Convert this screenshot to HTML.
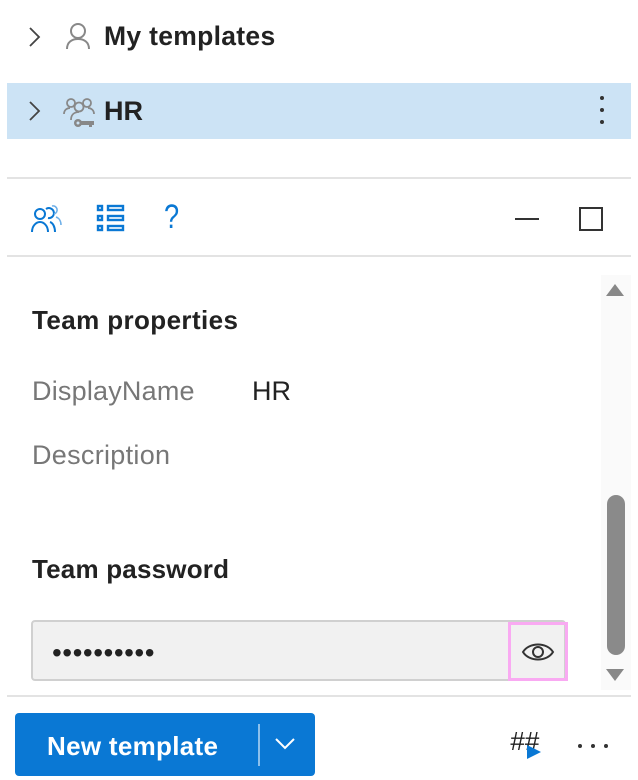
<!DOCTYPE html><html><head><style>
body{margin:0;width:638px;height:780px;background:#fff;font-family:"Liberation Sans",sans-serif;position:relative;overflow:hidden;color:#222}
.a{position:absolute}
.t{font-size:27px}
.g{color:#777}
</style></head><body>
<svg class="a" style="left:28px;top:26px" width="14" height="22"><path d="M2 2l9 9-9 9" stroke="#444" stroke-width="1.8" fill="none"/></svg>
<svg class="a" style="left:65px;top:22px" width="28" height="28"><circle cx="13" cy="9" r="7" stroke="#888" stroke-width="2" fill="none"/><path d="M2 27c0-7 5-10 11-10s11 3 11 10" stroke="#888" stroke-width="2" fill="none"/></svg>
<div class="a" style="left:104px;top:21px;font-weight:bold;font-size:26.5px;letter-spacing:0.3px">My templates</div>
<div class="a" style="left:7px;top:83px;width:624px;height:56px;background:#cce3f5"></div>
<svg class="a" style="left:28px;top:100px" width="14" height="22"><path d="M2 2l9 9-9 9" stroke="#444" stroke-width="1.8" fill="none"/></svg>
<svg class="a" style="left:63px;top:96px" width="34" height="32"><circle cx="8" cy="7" r="4" stroke="#888" stroke-width="1.8" fill="none"/><circle cx="24" cy="7" r="4" stroke="#888" stroke-width="1.8" fill="none"/><circle cx="16" cy="11" r="4.5" stroke="#888" stroke-width="1.8" fill="none"/><path d="M1 18c0-4 3-6 6-6M31 18c0-4-3-6-6-6M8 24c0-5 3-8 8-8" stroke="#888" stroke-width="1.8" fill="none"/><circle cx="15" cy="27" r="4" fill="#888"/><rect x="17" y="25" width="14" height="4" fill="#888"/><rect x="26" y="27" width="3" height="4" fill="#888"/><circle cx="15" cy="27" r="1.5" fill="#cce3f5"/></svg>
<div class="a" style="left:104px;top:96px;font-weight:bold;font-size:27px">HR</div>
<div class="a" style="left:600px;top:96px;width:4px;height:4px;border-radius:2px;background:#333;box-shadow:0 12px #333,0 24px #333"></div>
<div class="a" style="left:7px;top:177px;width:624px;height:2px;background:#e3e3e3"></div>
<svg class="a" style="left:30px;top:203px" width="34" height="30"><circle cx="10" cy="11" r="5" stroke="#0a78d4" stroke-width="2" fill="none"/><path d="M2 29c0-6 4-10 8-10s8 4 8 10" stroke="#0a78d4" stroke-width="2" fill="none"/><path d="M16 6a5 5 0 1 1 2 9M20 19c3 1 5 5 5 10" stroke="#0a78d4" stroke-width="2" fill="none"/><path d="M22 3a4 4 0 1 1 2 8M26 14c3 1 5 4 5 8" stroke="#6fb0e8" stroke-width="1.6" fill="none"/></svg>
<svg class="a" style="left:96px;top:204px" width="30" height="28"><g fill="none" stroke="#0a78d4" stroke-width="2.4"><rect x="2" y="2" width="4" height="4"/><rect x="2" y="12" width="4" height="4"/><rect x="2" y="22" width="4" height="4"/><rect x="12" y="2" width="15" height="4"/><rect x="12" y="12" width="15" height="4"/><rect x="12" y="22" width="15" height="4"/></g></svg>
<div class="a" style="left:164px;top:198px;font-size:34px;color:#0a78d4;transform:scaleX(0.8);transform-origin:left">?</div>
<div class="a" style="left:515px;top:218px;width:24px;height:2px;background:#333"></div>
<div class="a" style="left:579px;top:207px;width:20px;height:20px;border:2px solid #333"></div>
<div class="a" style="left:7px;top:255px;width:624px;height:2px;background:#e3e3e3"></div>
<div class="a" style="left:601px;top:275px;width:30px;height:415px;background:#fafafa"></div>
<div class="a" style="left:606px;top:284px;width:0;height:0;border-left:9px solid transparent;border-right:9px solid transparent;border-bottom:12px solid #888"></div>
<div class="a" style="left:607px;top:495px;width:18px;height:160px;border-radius:9px;background:#8a8a8a"></div>
<div class="a" style="left:606px;top:669px;width:0;height:0;border-left:9px solid transparent;border-right:9px solid transparent;border-top:12px solid #888"></div>
<div class="a" style="left:32px;top:305px;font-size:26px;font-weight:bold;letter-spacing:0.4px">Team properties</div>
<div class="a g t" style="left:32px;top:376px;letter-spacing:0.2px">DisplayName</div>
<div class="a t" style="left:252px;top:376px">HR</div>
<div class="a g t" style="left:32px;top:440px;letter-spacing:0.3px">Description</div>
<div class="a" style="left:32px;top:554px;font-size:26px;font-weight:bold;letter-spacing:0.2px">Team password</div>
<div class="a" style="left:31px;top:620px;width:535px;height:61px;background:#f1f1f1;border:2px solid #d0d0d0;border-radius:4px;box-sizing:border-box"></div>
<div class="a" style="left:52px;top:637px;font-size:28px;letter-spacing:0.5px">••••••••••</div>
<div class="a" style="left:508px;top:622px;width:60px;height:59px;border:3px solid #f9aaf2;box-sizing:border-box"></div>
<svg class="a" style="left:521px;top:640px" width="34" height="24"><path d="M2 12C8 2 26 2 32 12C26 22 8 22 2 12Z" stroke="#333" stroke-width="2" fill="none"/><circle cx="17" cy="12" r="5" stroke="#333" stroke-width="2" fill="none"/></svg>
<div class="a" style="left:7px;top:695px;width:624px;height:2px;background:#e3e3e3"></div>
<div class="a" style="left:15px;top:713px;width:300px;height:63px;background:#0a78d4;border-radius:4px"></div>
<div class="a" style="left:47px;top:731px;font-size:26px;font-weight:bold;color:#fff;letter-spacing:0.3px">New template</div>
<div class="a" style="left:258px;top:724px;width:2px;height:42px;background:#8cc0ec"></div>
<svg class="a" style="left:274px;top:737px" width="22" height="14"><path d="M2 2l9 9 9-9" stroke="#fff" stroke-width="2" fill="none"/></svg>
<div class="a" style="left:510px;top:726px;font-size:26px;font-style:italic;color:#222">##</div>
<div class="a" style="left:527px;top:745px;width:0;height:0;border-top:7px solid transparent;border-bottom:7px solid transparent;border-left:14px solid #0a78d4"></div>
<div class="a" style="left:578px;top:744px;width:4px;height:4px;background:#333;border-radius:2px;box-shadow:13px 0 #333,26px 0 #333"></div>
</body></html>
